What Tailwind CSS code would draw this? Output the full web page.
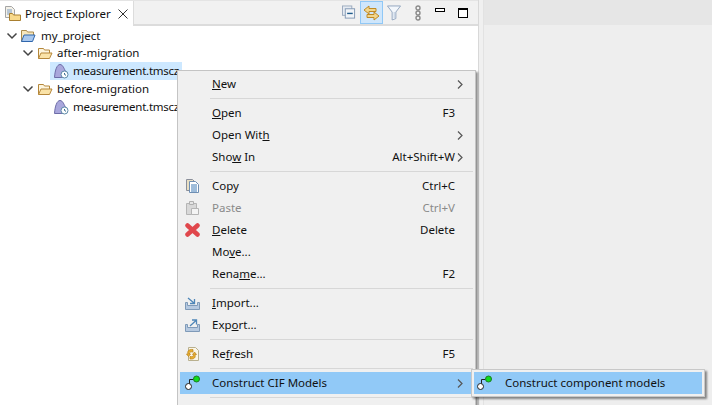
<!DOCTYPE html>
<html lang="en">
<head>
  <meta charset="UTF-8">
  <title>Project Explorer</title>
  <script src="https://cdn.jsdelivr.net/npm/@tailwindcss/browser@4"></script>
</head>
<body class="relative w-[712px] h-[405px] overflow-hidden bg-[#f0f0f0] font-['Noto_Sans','Open_Sans',sans-serif] text-[11.5px] text-[#111]">
  <div class="flex h-full">
    <!-- explorer view -->
    <div class="w-[479px] shrink-0 h-full flex flex-col bg-white border-r border-[#d8d8d8]">
      <div class="h-[26px] shrink-0 flex bg-[#f1f1f1] border-b-2 border-[#dcdcdc] border-t border-t-[#e4e4e4]">
        <div class="w-[134px] shrink-0 h-[25px] -mb-[2px] flex items-center pl-[5px] bg-white border-r border-[#dcdcdc]">
          <svg class="shrink-0" width="16" height="16" viewBox="0 0 16 16"><path d="M.5.500h6l3 3v8h-9z" fill="#f4f1e8" stroke="#a5a5a5"/><path d="M2 4h5M2 6h5M2 8h3" stroke="#7d9cc0"/><path d="M4.500 14.500v-7h3l1 1.500h7v5.500z" fill="#f8d98c" stroke="#a97f2f"/></svg>
          <span class="ml-[4px] w-[93px] whitespace-nowrap">Project Explorer</span>
          <svg class="shrink-0" width="10" height="10" viewBox="0 0 10 10"><path d="M.5.500l9 9M9.500.500l-9 9" stroke="#333"/></svg>
        </div>
        <div class="flex-1 flex items-center pl-[208px]">
          <svg class="shrink-0" width="14" height="15" viewBox="0 0 15 15"><rect x=".5" y=".5" width="10" height="10" fill="#e6ebf2" stroke="#9aa9bd"/><rect x="3.500" y="3.500" width="10" height="10" fill="#f1f4f8" stroke="#8298b3"/><path d="M5.500 8.500h6" stroke="#1f5c8c" stroke-width="1.500"/></svg>
          <div class="ml-[4px] shrink-0 w-[23px] h-[23px] flex items-center justify-center bg-[#cfe6fb] border border-[#90c8f6]">
            <svg class="shrink-0" width="17" height="16" viewBox="0 0 17 16"><path d="M1 5l5-4v2.500h7v3H6V9z" fill="#f2d68c" stroke="#c08a25"/><path d="M16 11l-5-4v2.500H4v3h7V15z" fill="#f2d68c" stroke="#c08a25"/></svg>
          </div>
          <svg class="ml-[4px] shrink-0" width="14" height="17" viewBox="0 0 15 17"><path d="M.5 1.500h14l-5 6.500v7l-4 1.500V8z" fill="#f3f7fc" stroke="#8ea3bd"/><path d="M7 8h1.500v6.500H7z" fill="#c9d6e6"/></svg>
          <svg class="ml-[14px] shrink-0" width="6" height="16" viewBox="0 0 6 16"><circle cx="3" cy="3" r="2" fill="none" stroke="#8a8a8a" stroke-width="1.400"/><circle cx="3" cy="8" r="2" fill="none" stroke="#8a8a8a" stroke-width="1.400"/><circle cx="3" cy="13" r="2" fill="none" stroke="#8a8a8a" stroke-width="1.400"/></svg>
          <div class="ml-[14px] shrink-0 w-[10px] h-[4px] mb-[6px] border border-black bg-white"></div>
          <div class="ml-[13px] shrink-0 w-[10px] h-[10px] border border-black border-t-2 bg-white"></div>
        </div>
      </div>
      <!-- tree -->
      <div class="flex flex-col leading-[16px]">
        <div class="h-[18px] flex items-center pl-[6px] pt-[2px]">
          <svg class="shrink-0" width="12" height="8" viewBox="0 0 12 8"><path d="M1.500 1.500l4.500 4.500 4.500-4.500" fill="none" stroke="#444" stroke-width="1.500"/></svg>
          <svg class="ml-[2px] shrink-0" width="16" height="14" viewBox="0 0 16 14"><path d="M1.500 12.500v-11h5l1 1.500h6v3" fill="#f7e7bd" stroke="#a98a4c"/><path d="M1.500 12.500l2.500-6.500h11l-2.500 6.500z" fill="#a9c8ee" stroke="#2f66ad"/></svg>
          <span class="ml-[5px]">my_project</span>
        </div>
        <div class="h-[18px] flex items-center pl-[22px]">
          <svg class="shrink-0" width="12" height="8" viewBox="0 0 12 8"><path d="M1.500 1.500l4.500 4.500 4.500-4.500" fill="none" stroke="#444" stroke-width="1.500"/></svg>
          <svg class="ml-[3px] shrink-0" width="16" height="13" viewBox="0 0 16 13"><path d="M1.500 11.500v-10h5l1 1.500h5v3" fill="#fdf5de" stroke="#b5873a"/><path d="M1.500 11.500l2.500-5.500h11l-2.500 5.500z" fill="#fae3a8" stroke="#b5873a"/></svg>
          <span class="ml-[4px]">after-migration</span>
        </div>
        <div class="h-[18px] flex items-center pl-[50px]">
          <div class="w-[132px] h-[18px] flex items-center bg-[#cde8ff] pl-[4px]">
            <svg class="shrink-0" width="15" height="16" viewBox="0 0 15 16"><path d="M.5 14.500C1 7 3 1.500 6 1.500S10 6 12 9l-3 5.500z" fill="#a9a7dc" stroke="#6d6ca8"/><circle cx="10.500" cy="11.500" r="3.500" fill="#fff" stroke="#5d8aa8"/><path d="M10.500 10v1.500l1.500 .8" fill="none" stroke="#34688c"/></svg>
            <span class="ml-[4px] whitespace-nowrap tracking-[-0.25px]">measurement.tmscz</span>
          </div>
        </div>
        <div class="h-[18px] flex items-center pl-[22px]">
          <svg class="shrink-0" width="12" height="8" viewBox="0 0 12 8"><path d="M1.500 1.500l4.500 4.500 4.500-4.500" fill="none" stroke="#444" stroke-width="1.500"/></svg>
          <svg class="ml-[3px] shrink-0" width="16" height="13" viewBox="0 0 16 13"><path d="M1.500 11.500v-10h5l1 1.500h5v3" fill="#fdf5de" stroke="#b5873a"/><path d="M1.500 11.500l2.500-5.500h11l-2.500 5.500z" fill="#fae3a8" stroke="#b5873a"/></svg>
          <span class="ml-[4px]">before-migration</span>
        </div>
        <div class="h-[18px] flex items-center pl-[54px]">
          <svg class="shrink-0" width="15" height="16" viewBox="0 0 15 16"><path d="M.5 14.500C1 7 3 1.500 6 1.500S10 6 12 9l-3 5.500z" fill="#a9a7dc" stroke="#6d6ca8"/><circle cx="10.500" cy="11.500" r="3.500" fill="#fff" stroke="#5d8aa8"/><path d="M10.500 10v1.500l1.500 .8" fill="none" stroke="#34688c"/></svg>
          <span class="ml-[4px] whitespace-nowrap tracking-[-0.25px]">measurement.tmscz</span>
        </div>
      </div>
    </div>
    <!-- editor area -->
    <div class="w-[4px] shrink-0 bg-[#f0f0f0]"></div>
    <div class="flex-1 flex flex-col border-l border-[#e2e2e2]">
      <div class="h-[25px] bg-[#e6e6e6]"></div>
      <div class="flex-1 bg-[#eeeeee]"></div>
    </div>
  </div>

  <!-- context menu -->
  <div class="absolute left-[177px] top-[70px] w-[299px] h-[340px] bg-[#f0f0f0] border border-[#c4c4c4] shadow-[2px_2px_2px_rgba(0,0,0,0.45)] pt-[2px] px-[2px]">
    <div class="h-[22px] flex items-center pl-[32px] pr-[10px]"><span class="flex-1"><u>N</u>ew</span><svg class="shrink-0" width="6" height="9" viewBox="0 0 6 9"><path d="M1 .5l4 4-4 4" fill="none" stroke="#555" stroke-width="1.200"/></svg></div>
    <div class="h-[7px] ml-[30px] flex items-center"><div class="w-full h-px bg-[#d7d7d7]"></div></div>
    <div class="h-[22px] flex items-center pl-[32px] pr-[18px]"><span class="flex-1"><u>O</u>pen</span><span>F3</span></div>
    <div class="h-[22px] flex items-center pl-[32px] pr-[10px]"><span class="flex-1">Open Wit<u>h</u></span><svg class="shrink-0" width="6" height="9" viewBox="0 0 6 9"><path d="M1 .5l4 4-4 4" fill="none" stroke="#555" stroke-width="1.200"/></svg></div>
    <div class="h-[22px] flex items-center pl-[32px] pr-[10px]"><span class="flex-1">Sho<u>w</u> In</span><span class="mr-[2px]">Alt+Shift+W</span><svg class="shrink-0" width="6" height="9" viewBox="0 0 6 9"><path d="M1 .5l4 4-4 4" fill="none" stroke="#555" stroke-width="1.200"/></svg></div>
    <div class="h-[7px] ml-[30px] flex items-center"><div class="w-full h-px bg-[#d7d7d7]"></div></div>
    <div class="h-[22px] flex items-center pl-[5px] pr-[18px]">
      <svg class="mr-[12px] shrink-0" width="15" height="16" viewBox="0 0 15 16"><path d="M1.500 1.500h6l2 2v9h-8z" fill="#e9dfc2" stroke="#8a8f9a"/><path d="M4.500 3.500h6l3 3v8h-9z" fill="#fff" stroke="#6f8fb3"/><path d="M6 7h6M6 9h6M6 11h6M6 13h6" stroke="#3f7ab5"/></svg>
      <span class="flex-1">Copy</span><span>Ctrl+C</span>
    </div>
    <div class="h-[22px] flex items-center pl-[5px] pr-[18px] text-[#8a8a8a]">
      <svg class="mr-[12px] shrink-0" width="15" height="16" viewBox="0 0 15 16"><path d="M1.500 3.500h10v11h-10z" fill="#d8d8d8" stroke="#b5b5b5"/><path d="M4.500 1.500h4v3h-4z" fill="#e5e5e5" stroke="#b0b0b0"/><path d="M6.500 8.500h7v6h-7z" fill="#f4f4f4" stroke="#b5b5b5"/></svg>
      <span class="flex-1">Paste</span><span>Ctrl+V</span>
    </div>
    <div class="h-[22px] flex items-center pl-[5px] pr-[18px]">
      <svg class="mr-[12px] shrink-0" width="15" height="14" viewBox="0 0 15 14"><path d="M2.500 2.500l10 9M12.500 2.500l-10 9" stroke="#e0474c" stroke-width="4.500" stroke-linecap="round"/></svg>
      <span class="flex-1"><u>D</u>elete</span><span>Delete</span>
    </div>
    <div class="h-[22px] flex items-center pl-[32px]"><span>Mo<u>v</u>e...</span></div>
    <div class="h-[22px] flex items-center pl-[32px] pr-[18px]"><span class="flex-1">Rena<u>m</u>e...</span><span>F2</span></div>
    <div class="h-[7px] ml-[30px] flex items-center"><div class="w-full h-px bg-[#d7d7d7]"></div></div>
    <div class="h-[22px] flex items-center pl-[5px]">
      <svg class="mr-[12px] shrink-0" width="15" height="13" viewBox="0 0 15 13"><path d="M.5 5.500h2v3h10v-3h2v7H.5z" fill="#b6c9e0" stroke="#7f9ab8"/><path d="M3 1l6 5M9.500 2v4.500H5" fill="none" stroke="#4f86b8" stroke-width="1.300"/></svg>
      <span><u>I</u>mport...</span>
    </div>
    <div class="h-[22px] flex items-center pl-[5px]">
      <svg class="mr-[12px] shrink-0" width="15" height="13" viewBox="0 0 15 13"><path d="M.5 5.500h2v3h10v-3h2v7H.5z" fill="#b6c9e0" stroke="#7f9ab8"/><path d="M5 7l6-5.500M7 1h4.500v4.500" fill="none" stroke="#4f86b8" stroke-width="1.300"/></svg>
      <span>Exp<u>o</u>rt...</span>
    </div>
    <div class="h-[7px] ml-[30px] flex items-center"><div class="w-full h-px bg-[#d7d7d7]"></div></div>
    <div class="h-[22px] flex items-center pl-[5px] pr-[18px]">
      <svg class="mr-[12px] shrink-0" width="15" height="16" viewBox="0 0 15 16"><path d="M3.500 1.500h7l3 3v10h-10z" fill="#faf6e8" stroke="#b9b08f"/><path d="M8 3.500C4 3 2 5 3 8H1.500l2 2.500 2-2.500H4.500C4 6.500 6 5.500 8 6z" fill="#e8ae2f" stroke="#b9811a" stroke-width=".7"/><path d="M5 13c4 .5 6-1.500 5-4.500h1.500l-2-2.500-2 2.500H8.500C9 10 7 11 5 10.500z" fill="#e8ae2f" stroke="#b9811a" stroke-width=".7"/></svg>
      <span class="flex-1">Re<u>f</u>resh</span><span>F5</span>
    </div>
    <div class="h-[7px] ml-[30px] flex items-center"><div class="w-full h-px bg-[#d7d7d7]"></div></div>
    <div class="h-[22px] flex items-center pl-[5px] pr-[10px] bg-[#91c9f7]">
      <svg class="mr-[12px] shrink-0" width="15" height="16" viewBox="0 0 15 16"><circle cx="11.500" cy="4" r="3" fill="#0fdc1e" stroke="#1c7a24"/><path d="M8 4.500H4.500V9" fill="none" stroke="#222"/><circle cx="3.500" cy="11.500" r="3" fill="#fff" stroke="#222"/></svg>
      <span class="flex-1">Construct CIF Models</span><svg class="shrink-0" width="6" height="9" viewBox="0 0 6 9"><path d="M1 .5l4 4-4 4" fill="none" stroke="#555" stroke-width="1.200"/></svg>
    </div>
    <div class="h-[7px] ml-[30px] flex items-center"><div class="w-full h-px bg-[#d7d7d7]"></div></div>
  </div>

  <!-- submenu -->
  <div class="absolute left-[471px] top-[369px] w-[234px] h-[28px] bg-[#f0f0f0] border border-[#c8c8c8] shadow-[2px_2px_2px_rgba(0,0,0,0.45)] p-[2px]">
    <div class="h-[22px] flex items-center pl-[3px] bg-[#91c9f7]">
      <svg class="mr-[13px] shrink-0" width="15" height="16" viewBox="0 0 15 16"><circle cx="11.500" cy="4" r="3" fill="#0fdc1e" stroke="#1c7a24"/><path d="M8 4.500H4.500V9" fill="none" stroke="#222"/><circle cx="3.500" cy="11.500" r="3" fill="#fff" stroke="#222"/></svg>
      <span>Construct component models</span>
    </div>
  </div>
</body>
</html>
